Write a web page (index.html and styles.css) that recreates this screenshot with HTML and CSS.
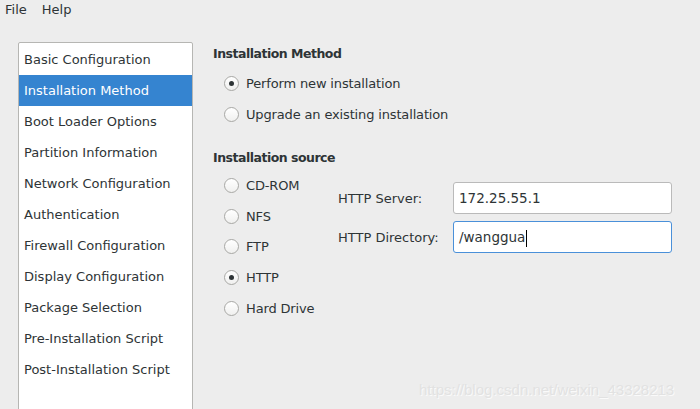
FILE: index.html
```html
<!DOCTYPE html>
<html>
<head>
<meta charset="utf-8">
<link rel="stylesheet" href="styles.css">
</head>
<body>
<div class="menubar">
  <span class="menu">File</span>
  <span class="menu">Help</span>
</div>
<div class="main">
  <ul class="sidebar">
    <li>Basic Configuration</li>
    <li class="selected">Installation Method</li>
    <li>Boot Loader Options</li>
    <li>Partition Information</li>
    <li>Network Configuration</li>
    <li>Authentication</li>
    <li>Firewall Configuration</li>
    <li>Display Configuration</li>
    <li>Package Selection</li>
    <li>Pre-Installation Script</li>
    <li>Post-Installation Script</li>
  </ul>
  <div class="content">
    <h2 class="section-title">Installation Method</h2>
    <div class="radio-list">
      <div class="radio-row"><span class="radio checked"></span>Perform new installation</div>
      <div class="radio-row"><span class="radio"></span>Upgrade an existing installation</div>
    </div>
    <h2 class="section-title source-title">Installation source</h2>
    <div class="source">
      <div class="radio-list sources">
        <div class="radio-row"><span class="radio"></span>CD-ROM</div>
        <div class="radio-row"><span class="radio"></span>NFS</div>
        <div class="radio-row"><span class="radio"></span>FTP</div>
        <div class="radio-row"><span class="radio checked"></span>HTTP</div>
        <div class="radio-row"><span class="radio"></span>Hard Drive</div>
      </div>
      <div class="fields">
        <div class="field"><label>HTTP Server:</label><div class="input">172.25.55.1</div></div>
        <div class="field"><label>HTTP Directory:</label><div class="input focus">/wanggua<span class="caret"></span></div></div>
      </div>
    </div>
  </div>
</div>
<div class="watermark">https://blog.csdn.net/weixin_43328213</div>
</body>
</html>
```
FILE: styles.css
```css
html, body {
  margin: 0;
  padding: 0;
  width: 700px;
  height: 409px;
  overflow: hidden;
  background: #ededed;
  font-family: "DejaVu Sans", sans-serif;
  font-size: 13px;
  color: #2e3436;
}
.menubar {
  display: flex;
  gap: 15px;
  height: 19px;
  padding-left: 5px;
  align-items: center;
  font-size: 13px;
}
.main {
  display: flex;
  padding-top: 23px;
  padding-left: 18px;
}
.sidebar {
  list-style: none;
  margin: 0;
  padding: 1px 0 0;
  width: 173px;
  height: 380px;
  background: #fff;
  border: 1px solid #b6b6b3;
  border-radius: 2px 2px 0 0;
}
.sidebar li {
  height: 31px;
  line-height: 31px;
  padding-left: 5px;
  white-space: nowrap;
}
.sidebar li.selected {
  background: #3584d0;
  color: #fff;
}
.content {
  padding-left: 20px;
  padding-top: 1px;
  flex: 1;
}
.section-title {
  margin: 0;
  font-size: 12.5px;
  letter-spacing: -0.5px;
  font-weight: bold;
  height: 22px;
  line-height: 22px;
}
.radio-list {
  padding-left: 11px;
  padding-top: 3px;
}
.radio-row {
  display: flex;
  align-items: center;
  height: 31px;
  gap: 7px;
  letter-spacing: -0.15px;
}
.radio {
  width: 13px;
  height: 13px;
  border: 1px solid #a8a8a5;
  border-radius: 50%;
  background: linear-gradient(#ffffff, #f0f0ef);
  display: flex;
  align-items: center;
  justify-content: center;
  flex: none;
}
.radio.checked::after {
  content: "";
  width: 5px;
  height: 5px;
  border-radius: 50%;
  background: #2e3436;
}
.source-title {
  margin-top: 17px;
}
.source {
  display: flex;
}
.sources {
  width: 114px;
  padding-top: 1px;
}
.sources .radio-row {
  height: 30.8px;
}
.fields {
  padding-top: 13px;
  display: flex;
  flex-direction: column;
  gap: 7px;
}
.field {
  display: flex;
  align-items: center;
}
.field label {
  width: 115px;
}
.input {
  width: 212px;
  height: 30px;
  border: 1px solid #bababa;
  border-radius: 3px;
  background: #fff;
  padding-left: 5px;
  line-height: 30px;
  font-size: 13.5px;
}
.input.focus {
  border-color: #4a90d9;
}
.caret {
  display: inline-block;
  width: 1px;
  height: 17px;
  background: #000;
  vertical-align: middle;
  margin-left: 1px;
}
.watermark {
  position: absolute;
  left: 419px;
  top: 381px;
  font-family: "Liberation Sans", sans-serif;
  font-size: 15px;
  color: #e2e2e2;
  text-shadow: 1px 1px 0 #fafafa;
}
```
